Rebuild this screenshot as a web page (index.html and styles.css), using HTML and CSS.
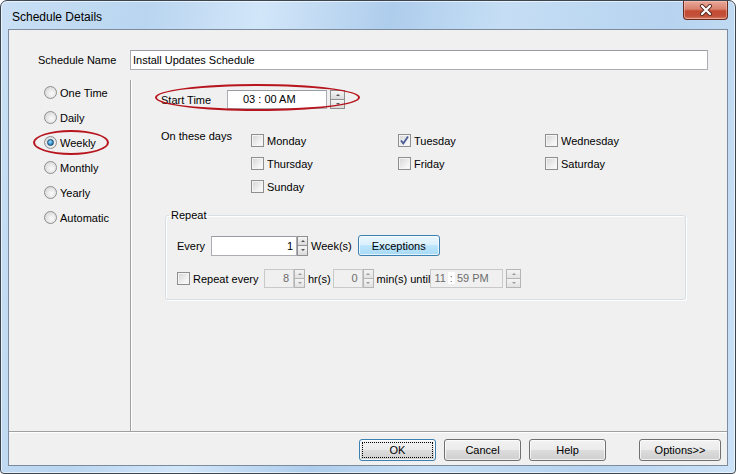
FILE: index.html
```html
<!DOCTYPE html>
<html lang="en">
<head>
  <meta charset="UTF-8">
  <title>Schedule Details</title>
  <link rel="stylesheet" href="styles.css">
</head>
<body>
  <div class="window">
    <div class="titlebar">
      <span class="title">Schedule Details</span>
      <button class="close-btn" title="Close">
        <svg width="14" height="12" viewBox="0 0 14 12">
          <path d="M3 2 L11 10 M11 2 L3 10" stroke="#5a2a22" stroke-width="4" stroke-linecap="round"/>
          <path d="M3 2 L11 10 M11 2 L3 10" stroke="#fff" stroke-width="2.2" stroke-linecap="round"/>
        </svg>
      </button>
    </div>

    <div class="client">
      <div class="name-row">
        <span class="name-label">Schedule Name</span>
        <div class="textbox name-box">Install Updates Schedule</div>
      </div>

      <div class="main">
        <!-- frequency -->
        <div class="freq-list">
          <div class="radio-row"><span class="radio"></span>One Time</div>
          <div class="radio-row"><span class="radio"></span>Daily</div>
          <div class="radio-row"><span class="radio checked"></span>Weekly</div>
          <div class="radio-row"><span class="radio"></span>Monthly</div>
          <div class="radio-row"><span class="radio"></span>Yearly</div>
          <div class="radio-row"><span class="radio"></span>Automatic</div>
        </div>

        <div class="pane">
          <div class="start-row">
            <span class="start-label">Start Time</span>
            <div class="textbox time-box">03 : 00 AM</div>
            <div class="spinner wide">
              <span class="up"></span><span class="down"></span>
            </div>
          </div>

          <div class="days">
            <span class="days-label">On these days</span>
            <div class="day-grid">
              <div class="check-row"><span class="checkbox"></span>Monday</div>
              <div class="check-row"><span class="checkbox checked"><svg width="11" height="11" viewBox="0 0 11 11"><path d="M2 5.5 L4.3 8.5 L9 1.5" fill="none" stroke="#4a5c96" stroke-width="1.8"/></svg></span>Tuesday</div>
              <div class="check-row"><span class="checkbox"></span>Wednesday</div>
              <div class="check-row"><span class="checkbox"></span>Thursday</div>
              <div class="check-row"><span class="checkbox"></span>Friday</div>
              <div class="check-row"><span class="checkbox"></span>Saturday</div>
              <div class="check-row"><span class="checkbox"></span>Sunday</div>
            </div>
          </div>

          <fieldset class="repeat">
            <legend>Repeat</legend>
            <div class="repeat-row">
              <span class="every-label">Every</span>
              <div class="textbox num-box">1</div>
              <div class="spinner narrow">
                <span class="up"></span><span class="down"></span>
              </div>
              <span class="unit">Week(s)</span>
              <button class="btn btn-hot">Exceptions</button>
            </div>
            <div class="repeat-row second">
              <span class="checkbox"></span>
              <span class="check-label">Repeat every</span>
              <div class="textbox off small-box">8</div>
              <div class="spinner narrow off">
                <span class="up"></span><span class="down"></span>
              </div>
              <span class="unit">hr(s)</span>
              <div class="textbox off small-box">0</div>
              <div class="spinner narrow off">
                <span class="up"></span><span class="down"></span>
              </div>
              <span class="unit tight">min(s) until</span>
              <div class="textbox off until-box">11<span class="colon">:</span>59 PM</div>
              <div class="spinner wide off">
                <span class="up"></span><span class="down"></span>
              </div>
            </div>
          </fieldset>
        </div>
      </div>

      <div class="footer">
        <button class="btn btn-default"><span>OK</span></button>
        <button class="btn">Cancel</button>
        <button class="btn">Help</button>
        <button class="btn btn-options">Options&gt;&gt;</button>
      </div>
    </div>

    <!-- red marks drawn over the dialog -->
    <div class="mark mark-weekly"></div>
    <div class="mark mark-start"></div>
  </div>
</body>
</html>
```

FILE: styles.css
```css
body {
  margin: 0;
  font-family: 'Liberation Sans', Arial, sans-serif;
  font-size: 11px;
  color: #000;
  background: #fff;
}

.window {
  position: relative;
  box-sizing: border-box;
  width: 736px;
  height: 474px;
  border: 1px solid #3b4651;
  border-radius: 7px 7px 4px 4px;
  padding: 0 7px 7px;
  display: flex;
  flex-direction: column;
  background: linear-gradient(100deg, #c9e0f5 0%, #b9d5f0 18%, #d2e6f9 32%, #aecdec 48%, #c5def5 62%, #b7d3ef 82%, #cbe2f7 100%);
  box-shadow: inset 0 0 0 1px rgba(255, 255, 255, 0.6);
}

/* title bar */
.titlebar {
  height: 28px;
  display: flex;
  align-items: flex-start;
  flex-shrink: 0;
}

.title {
  font-family: 'Liberation Sans', Arial, sans-serif;
  font-size: 12px;
  margin: 9px 0 0 4px;
  line-height: 15px;
  color: #000;
}

.close-btn {
  margin-left: auto;
  width: 45px;
  height: 19px;
  padding: 0;
  border: 1px solid #6b2a20;
  border-top: none;
  border-radius: 0 0 4px 4px;
  background: linear-gradient(#e9a99a 0%, #d9826e 45%, #c44a32 55%, #c2513b 85%, #db8a6f 100%);
  box-shadow: inset 0 0 0 1px rgba(255, 210, 200, 0.45);
  display: flex;
  align-items: center;
  justify-content: center;
}

.close-btn svg {
  display: block;
}

/* client area */
.client {
  flex: 1;
  display: flex;
  flex-direction: column;
  border: 1px solid #7d8c9c;
  background: #f0f0f0;
  min-height: 0;
}

.name-row {
  display: flex;
  align-items: center;
  margin-top: 20px;
  padding-left: 29px;
  height: 20px;
}

.name-label {
  width: 92px;
}

.textbox {
  box-sizing: border-box;
  border: 1px solid #abadb3;
  border-top-color: #9a9ca3;
  background: #fff;
  height: 20px;
  line-height: 18px;
  padding: 0 2px;
  white-space: nowrap;
}

.name-box {
  width: 578px;
}

.main {
  flex: 1;
  display: flex;
  margin-top: 10px;
}

.freq-list {
  width: 122px;
  padding: 0 0 0 35px;
  box-sizing: border-box;
  border-right: 1px solid #a0a0a0;
  box-shadow: 1px 0 0 #fff;
}

.radio-row {
  height: 25px;
  display: flex;
  align-items: center;
}

.radio {
  box-sizing: border-box;
  width: 13px;
  height: 13px;
  border-radius: 50%;
  border: 1px solid #8c8e90;
  background: radial-gradient(circle at 60% 60%, #fbfbfb 0%, #e8e8e8 45%, #cfcfcf 100%);
  margin-right: 3px;
  position: relative;
  flex-shrink: 0;
}

.radio.checked::after {
  content: '';
  position: absolute;
  left: 2px;
  top: 2px;
  width: 7px;
  height: 7px;
  box-sizing: border-box;
  border-radius: 50%;
  border: 1px solid #1b4a70;
  background: radial-gradient(circle at 40% 35%, #a8e0fb 0%, #3a9ad8 50%, #1a5d96 100%);
}

.pane {
  flex: 1;
  padding: 10px 0 0 30px;
}

.start-row {
  display: flex;
  align-items: center;
  height: 19px;
}

.start-label {
  width: 66px;
}

.time-box {
  width: 100px;
  height: 19px;
  line-height: 17px;
  padding-left: 15px;
}

.spinner {
  box-sizing: border-box;
  display: flex;
  flex-direction: column;
  height: 19px;
}

.spinner.wide {
  width: 15px;
  margin-left: 3px;
}

.spinner.narrow {
  width: 11px;
  height: 20px;
}

.spinner span {
  flex: 1;
  border: 1px solid #8f8f8f;
  background: linear-gradient(#f6f6f6, #dadada);
  position: relative;
}

.spinner span + span {
  border-top: none;
}

.spinner .up::after,
.spinner .down::after {
  content: '';
  position: absolute;
  left: 50%;
  top: 50%;
  margin-left: -2px;
  border-left: 2px solid transparent;
  border-right: 2px solid transparent;
}

.spinner .up::after {
  margin-top: -1px;
  border-bottom: 2px solid #555;
}

.spinner .down::after {
  margin-top: -1px;
  border-top: 2px solid #555;
}

.spinner.off span {
  border-color: #b5b5b5;
  background: linear-gradient(#f4f4f4, #e2e2e2);
}

.spinner.off .up::after {
  border-bottom-color: #9a9a9a;
}

.spinner.off .down::after {
  border-top-color: #9a9a9a;
}

/* days */
.days {
  display: flex;
  margin-top: 20px;
}

.days-label {
  width: 90px;
  margin-top: 1px;
}

.day-grid {
  display: grid;
  grid-template-columns: 147px 147px 147px;
  grid-auto-rows: 23px;
}

.check-row {
  display: flex;
  align-items: center;
}

.checkbox {
  box-sizing: border-box;
  width: 13px;
  height: 13px;
  border: 1px solid #8e8f8f;
  background: linear-gradient(135deg, #d4d4d4 0%, #f4f4f4 70%, #fafafa 100%);
  box-shadow: inset 0 0 0 1px #f4f4f4;
  margin-right: 3px;
  flex-shrink: 0;
  display: flex;
  align-items: center;
  justify-content: center;
}

.checkbox svg {
  display: block;
}

/* repeat group */
.repeat {
  width: 521px;
  box-sizing: border-box;
  margin: 10px 0 0 4px;
  padding: 13px 10px 11px 11px;
  border: 1px solid #d5dfe5;
  border-radius: 3px;
  box-shadow: inset 1px 1px 0 #fff, 1px 1px 0 #fff;
}

.repeat legend {
  padding: 0 2px;
  margin-left: -8px;
  line-height: 14px;
}

.repeat-row {
  display: flex;
  align-items: center;
  height: 21px;
}

.repeat-row.second {
  margin-top: 13px;
  height: 19px;
}

.every-label {
  width: 34px;
}

.num-box {
  width: 86px;
  text-align: right;
  padding-right: 3px;
}

.unit {
  margin: 0 2px 0 3px;
}

.unit.tight {
  margin-right: 0;
}

.btn {
  box-sizing: border-box;
  height: 22px;
  padding: 0;
  font-family: 'Liberation Sans', Arial, sans-serif;
  font-size: 11px;
  color: #000;
  border: 1px solid #707070;
  border-radius: 3px;
  background: linear-gradient(#f2f2f2 0%, #ebebeb 49%, #dddddd 50%, #cfcfcf 100%);
  box-shadow: inset 0 0 0 1px rgba(255, 255, 255, 0.7);
}

.btn-hot {
  width: 82px;
  height: 21px;
  margin-left: 4px;
  border-color: #3c7fb1;
  background: linear-gradient(#eaf6fd 0%, #d9f0fc 49%, #bee6fd 50%, #a7d9f5 100%);
}

.check-label {
  width: 71px;
}

.textbox.off {
  height: 19px;
  line-height: 17px;
  color: #6d6d6d;
  border-color: #c9c9c9;
  background: #f0f0f0;
}

.small-box {
  width: 30px;
  text-align: right;
  padding-right: 4px;
}

.spinner.narrow.off {
  height: 19px;
}

.until-box {
  width: 73px;
  padding-left: 3px;
}

.colon {
  background: #fff;
  padding: 0 2px;
  margin: 0 2px;
}

/* footer */
.footer {
  height: 34px;
  flex-shrink: 0;
  border-top: 1px solid #a0a0a0;
  box-shadow: inset 0 1px 0 #fff;
  display: flex;
  justify-content: flex-end;
  align-items: flex-start;
  padding: 7px 6px 0 0;
  box-sizing: border-box;
  gap: 8px;
}

.footer .btn {
  width: 77px;
}

.footer .btn-default {
  width: 77px;
  border-color: #3c7fb1;
  padding: 2px;
}

.btn-default span {
  display: flex;
  align-items: center;
  justify-content: center;
  height: 100%;
  border: 1px dotted #000;
  box-sizing: border-box;
}

.footer .btn-options {
  width: 82px;
  margin-left: 25px;
}

/* red ellipses */
.mark {
  position: absolute;
  border: 2px solid #b8141d;
  border-radius: 50%;
  box-sizing: border-box;
}

.mark-weekly {
  left: 32px;
  top: 129px;
  width: 76px;
  height: 25px;
}

.mark-start {
  left: 154px;
  top: 83px;
  width: 205px;
  height: 27px;
}
```
